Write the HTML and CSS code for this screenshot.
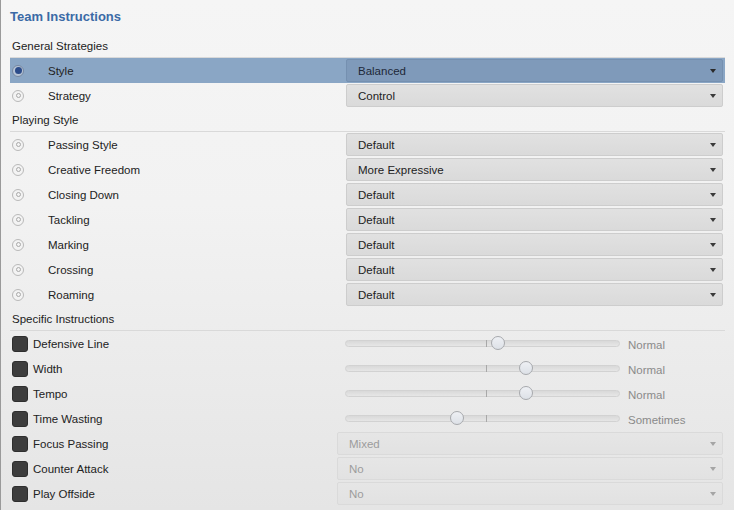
FILE: index.html
```html
<!DOCTYPE html>
<html>
<head>
<meta charset="utf-8">
<link rel="stylesheet" href="styles.css">
</head>
<body>
<div class="panel">
  <div class="title">Team Instructions</div>
  <div class="content">
    <div class="head">General Strategies</div>
    <div class="row selected">
      <span class="radio on"></span><span class="label">Style</span>
      <div class="select sel-on"><span>Balanced</span><i class="arrow"></i></div>
    </div>
    <div class="row">
      <span class="radio"></span><span class="label">Strategy</span>
      <div class="select"><span>Control</span><i class="arrow"></i></div>
    </div>

    <div class="head">Playing Style</div>
    <div class="row"><span class="radio"></span><span class="label">Passing Style</span><div class="select"><span>Default</span><i class="arrow"></i></div></div>
    <div class="row"><span class="radio"></span><span class="label">Creative Freedom</span><div class="select"><span>More Expressive</span><i class="arrow"></i></div></div>
    <div class="row"><span class="radio"></span><span class="label">Closing Down</span><div class="select"><span>Default</span><i class="arrow"></i></div></div>
    <div class="row"><span class="radio"></span><span class="label">Tackling</span><div class="select"><span>Default</span><i class="arrow"></i></div></div>
    <div class="row"><span class="radio"></span><span class="label">Marking</span><div class="select"><span>Default</span><i class="arrow"></i></div></div>
    <div class="row"><span class="radio"></span><span class="label">Crossing</span><div class="select"><span>Default</span><i class="arrow"></i></div></div>
    <div class="row"><span class="radio"></span><span class="label">Roaming</span><div class="select"><span>Default</span><i class="arrow"></i></div></div>

    <div class="head">Specific Instructions</div>
    <div class="crow"><span class="cb"></span><span class="clabel slabel">Defensive Line</span><div class="track"><i class="tick"></i><i class="thumb" style="left:145px"></i></div><span class="val">Normal</span></div>
    <div class="crow"><span class="cb"></span><span class="clabel slabel">Width</span><div class="track"><i class="tick"></i><i class="thumb" style="left:173px"></i></div><span class="val">Normal</span></div>
    <div class="crow"><span class="cb"></span><span class="clabel slabel">Tempo</span><div class="track"><i class="tick"></i><i class="thumb" style="left:173px"></i></div><span class="val">Normal</span></div>
    <div class="crow"><span class="cb"></span><span class="clabel slabel">Time Wasting</span><div class="track"><i class="tick"></i><i class="thumb" style="left:104px"></i></div><span class="val">Sometimes</span></div>
    <div class="crow"><span class="cb"></span><span class="clabel dlabel">Focus Passing</span><div class="select dis"><span>Mixed</span><i class="arrow"></i></div></div>
    <div class="crow"><span class="cb"></span><span class="clabel dlabel">Counter Attack</span><div class="select dis"><span>No</span><i class="arrow"></i></div></div>
    <div class="crow"><span class="cb"></span><span class="clabel dlabel">Play Offside</span><div class="select dis"><span>No</span><i class="arrow"></i></div></div>
  </div>
</div>
</body>
</html>
```

FILE: styles.css
```css
html, body {
  margin: 0;
  padding: 0;
}
body {
  width: 734px;
  height: 510px;
  overflow: hidden;
  font-family: "Liberation Sans", Arial, sans-serif;
  font-size: 11.5px;
  color: #222;
  background: linear-gradient(#f5f5f5, #f2f2f2 40%, #e5e5e5);
}
.panel {
  height: 510px;
  border-left: 1px solid #9a9a9a;
  box-sizing: border-box;
}
.title {
  height: 34px;
  box-sizing: border-box;
  padding: 9px 0 0 9px;
  font-size: 13px;
  font-weight: bold;
  color: #3b6aa6;
  line-height: 16px;
}
.content {
  padding-left: 9px;
  width: 715px;
}
.head {
  height: 23px;
  box-sizing: border-box;
  padding: 1px 0 0 2px;
  line-height: 22px;
  border-bottom: 1px solid #d9d9d9;
  box-sizing: content-box;
  height: 22px;
}
.row {
  display: flex;
  align-items: center;
  height: 25px;
}
.row.selected {
  background: #8aa6c5;
}
.radio {
  width: 10px;
  height: 10px;
  margin-left: 2px;
  border-radius: 50%;
  border: 1px solid #b9b9b9;
  background: #f3f3f3;
  position: relative;
  box-sizing: content-box;
}
.radio::after {
  content: "";
  position: absolute;
  left: 2.5px;
  top: 2.5px;
  width: 3px;
  height: 3px;
  border-radius: 50%;
  border: 1px solid #a9a9a9;
}
.radio.on {
  border-color: #7687a0;
  background: #b6c4d6;
}
.radio.on::after {
  left: 1.5px;
  top: 1.5px;
  width: 7px;
  height: 7px;
  border: 0;
  background: #2c4c8a;
}
.label {
  width: 298px;
  margin-left: 24px;
}
.select {
  width: 377px;
  height: 23px;
  box-sizing: border-box;
  border: 1px solid #cdcdcd;
  border-radius: 2px;
  background: linear-gradient(#e1e1e1, #dadada);
  display: flex;
  align-items: center;
  justify-content: space-between;
  padding: 0 6px 0 11px;
}
.select.sel-on {
  background: #7f9aba;
  border-color: #7590b0;
  color: #1d2838;
}
.arrow {
  width: 0;
  height: 0;
  border-left: 3.5px solid transparent;
  border-right: 3.5px solid transparent;
  border-top: 4px solid #3a3a3a;
}
.sel-on .arrow {
  border-top-color: #2a2a2a;
}
.crow {
  display: flex;
  align-items: center;
  height: 25px;
}
.cb {
  width: 16px;
  height: 16px;
  margin-left: 2px;
  box-sizing: border-box;
  border: 1px solid #2e2e2e;
  border-radius: 3px;
  background: #3d3d3d;
}
.clabel {
  margin-left: 5px;
}
.slabel {
  width: 312px;
}
.dlabel {
  width: 304px;
}
.track {
  position: relative;
  width: 275px;
  height: 7px;
  box-sizing: border-box;
  border: 1px solid #d2d2d2;
  border-radius: 4px;
  background: linear-gradient(#d9d9d9, #e6e6e6);
}
.tick {
  position: absolute;
  left: 140px;
  top: -1px;
  width: 1px;
  height: 7px;
  background: #a8a8a8;
}
.thumb {
  position: absolute;
  top: -5px;
  width: 14px;
  height: 14px;
  box-sizing: border-box;
  border-radius: 50%;
  border: 1px solid #a7a9ad;
  background: linear-gradient(#eef0f4, #dde1e7);
}
.val {
  margin-left: 8px;
  color: #8a8a8a;
  padding-top: 2px;
}
.select.dis {
  width: 386px;
  background: linear-gradient(#e6e6e6, #e2e2e2);
  border-color: #dadada;
  color: #9c9c9c;
}
.dis .arrow {
  border-top-color: #a5a5a5;
}
```
